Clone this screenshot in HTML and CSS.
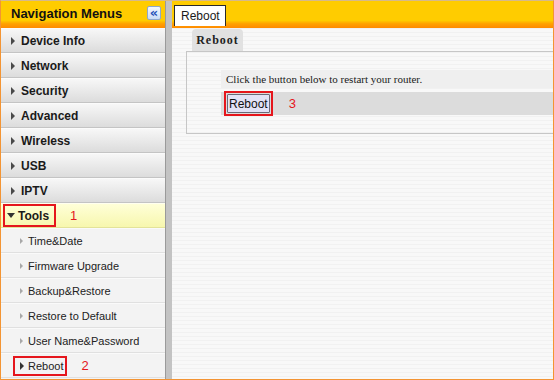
FILE: index.html
```html
<!DOCTYPE html>
<html lang="en">
<head>
  <meta charset="UTF-8">
  <title>Reboot</title>
  <link rel="stylesheet" href="styles.css">
</head>
<body>
  <div class="frame">
    <aside class="nav">
      <div class="nav-head">
        <span class="nav-title">Navigation Menus</span>
        <button class="collapse">&laquo;</button>
      </div>
      <ul class="menu">
        <li class="item"><span class="tri"></span>Device Info</li>
        <li class="item"><span class="tri"></span>Network</li>
        <li class="item"><span class="tri"></span>Security</li>
        <li class="item"><span class="tri"></span>Advanced</li>
        <li class="item"><span class="tri"></span>Wireless</li>
        <li class="item"><span class="tri"></span>USB</li>
        <li class="item"><span class="tri"></span>IPTV</li>
        <li class="item open">
          <span class="mark"><span class="tri down"></span>Tools</span>
          <span class="step">1</span>
        </li>
        <li class="sub"><span class="chev"></span>Time&amp;Date</li>
        <li class="sub"><span class="chev"></span>Firmware Upgrade</li>
        <li class="sub"><span class="chev"></span>Backup&amp;Restore</li>
        <li class="sub"><span class="chev"></span>Restore to Default</li>
        <li class="sub"><span class="chev"></span>User Name&amp;Password</li>
        <li class="sub current">
          <span class="mark"><span class="chev dark"></span>Reboot</span>
          <span class="step">2</span>
        </li>
      </ul>
    </aside>

    <main class="main">
      <div class="main-head">
        <span class="tab">Reboot</span>
      </div>
      <section class="panel">
        <div class="panel-tab">Reboot</div>
        <div class="panel-box">
          <div class="row note">Click the button below to restart your router.</div>
          <div class="row action">
            <span class="mark btn-mark"><button class="btn">Reboot</button></span>
            <span class="step">3</span>
          </div>
        </div>
      </section>
    </main>
  </div>
</body>
</html>
```

FILE: styles.css
```css
* {
  box-sizing: border-box;
}

body {
  margin: 0;
  background: #ffffff;
}

.frame {
  width: 554px;
  height: 380px;
  display: flex;
  border: 1px solid #f39433;
  border-top-color: #d6b98a;
  font-family: "Liberation Sans", Arial, sans-serif;
  color: #1a1a1a;
  overflow: hidden;
}

/* ---- left navigation ---- */
.nav {
  width: 165px;
  flex: none;
  border-right: 1px solid #9a9a9a;
  background: #f3f3f3;
}

.nav-head,
.main-head {
  height: 27px;
  background: linear-gradient(#ffcc00 0%, #ffcc00 72%, #ffa200 84%, #ff8a00 100%);
}

.nav-head {
  display: flex;
  align-items: center;
  justify-content: space-between;
  padding: 0 4px 3px 10px;
}

.nav-title {
  font-size: 13px;
  font-weight: bold;
  color: #111;
}

.collapse {
  width: 14px;
  height: 14px;
  padding: 0;
  margin: 0;
  border: 1px solid #8fa8cc;
  border-radius: 2px;
  background: linear-gradient(#f4f8ff, #c9dbf6);
  color: #1c4fb8;
  font-size: 13px;
  line-height: 10px;
  font-weight: bold;
  font-family: "DejaVu Sans", sans-serif;
}

.menu {
  list-style: none;
  margin: 0;
  padding: 0;
}

.item,
.sub {
  height: 25px;
  display: flex;
  align-items: center;
}

.item {
  padding-left: 10px;
  font-size: 12px;
  font-weight: bold;
  background: linear-gradient(#f7f7f7, #dcdcdc);
  border-top: 1px solid #fbfbfb;
  border-bottom: 1px solid #c4c4c4;
}

.tri {
  width: 0;
  height: 0;
  margin-right: 6px;
  border-left: 4px solid #4a4a4a;
  border-top: 4px solid transparent;
  border-bottom: 4px solid transparent;
}

.tri.down {
  margin-right: 3px;
  border-top: 5px solid #333;
  border-left: 4px solid transparent;
  border-right: 4px solid transparent;
  border-bottom: 0;
}

.item.open {
  padding-left: 2px;
  background: linear-gradient(#ffffd8, #f7f7ae);
  border-top-color: #fffff0;
  border-bottom-color: #e3e39a;
}

.mark {
  display: inline-flex;
  align-items: center;
  border: 2px solid #e5161d;
}

.item.open .mark {
  height: 23px;
  padding: 0 5px 0 2px;
}

.step {
  color: #e5161d;
  font-size: 13px;
  font-weight: normal;
  margin-left: 14px;
}

.sub {
  padding-left: 19px;
  font-size: 11px;
  color: #222;
  background: #f3f3f3;
  border-top: 1px solid #fafafa;
  border-bottom: 1px solid #e0e0e0;
}

.chev {
  width: 0;
  height: 0;
  margin-right: 5px;
  border-left: 3px solid #a8a8a8;
  border-top: 3px solid transparent;
  border-bottom: 3px solid transparent;
}

.chev.dark {
  border-left-color: #333;
  border-left-width: 4px;
  border-top-width: 4px;
  border-bottom-width: 4px;
  margin-right: 4px;
}

.sub.current {
  padding-left: 12px;
}

.sub.current .mark {
  height: 20px;
  padding: 0 2px 0 5px;
}

/* ---- main area ---- */
.main {
  flex: 1;
  border-left: 6px solid #c3c3c3;
  background: repeating-linear-gradient(#f8f8f8 0 3px, #f1f1f1 3px 4px);
}

.main-head {
  display: flex;
  align-items: flex-end;
  padding: 0 0 2px 2px;
}

.tab {
  width: 52px;
  height: 21px;
  padding-left: 6px;
  background: #fff;
  border: 1px solid #2a2a2a;
  border-bottom: 0;
  font-size: 12px;
  line-height: 20px;
}

.panel {
  padding-top: 1px;
}

.panel-tab {
  width: 51px;
  height: 22px;
  margin-left: 20px;
  border-radius: 4px 4px 0 0;
  background: #e1e1e1;
  font-family: "Liberation Serif", "Times New Roman", serif;
  font-weight: bold;
  font-size: 12px;
  letter-spacing: 1px;
  line-height: 22px;
  text-align: center;
  color: #222;
}

.panel-box {
  margin-left: 14px;
  height: 83px;
  border: 1px solid #c6c6c6;
  border-right: 0;
  padding: 18px 0 0 34px;
}

.row {
  display: flex;
  align-items: center;
}

.note {
  height: 18px;
  padding-left: 5px;
  background: #efefef;
  font-family: "Liberation Serif", "Times New Roman", serif;
  font-size: 11px;
}

.action {
  height: 23px;
  margin-top: 4px;
  padding-left: 3px;
  background: #dcdcdc;
}

.btn-mark {
  padding: 1px;
}

.btn {
  height: 19px;
  padding: 0 1px;
  margin: 0;
  border: 1px solid #6a6a78;
  border-radius: 1px;
  background: #e2e2f6;
  font-family: "Liberation Sans", Arial, sans-serif;
  font-size: 12px;
  color: #111;
}

.action .step {
  margin-left: 16px;
}
```
